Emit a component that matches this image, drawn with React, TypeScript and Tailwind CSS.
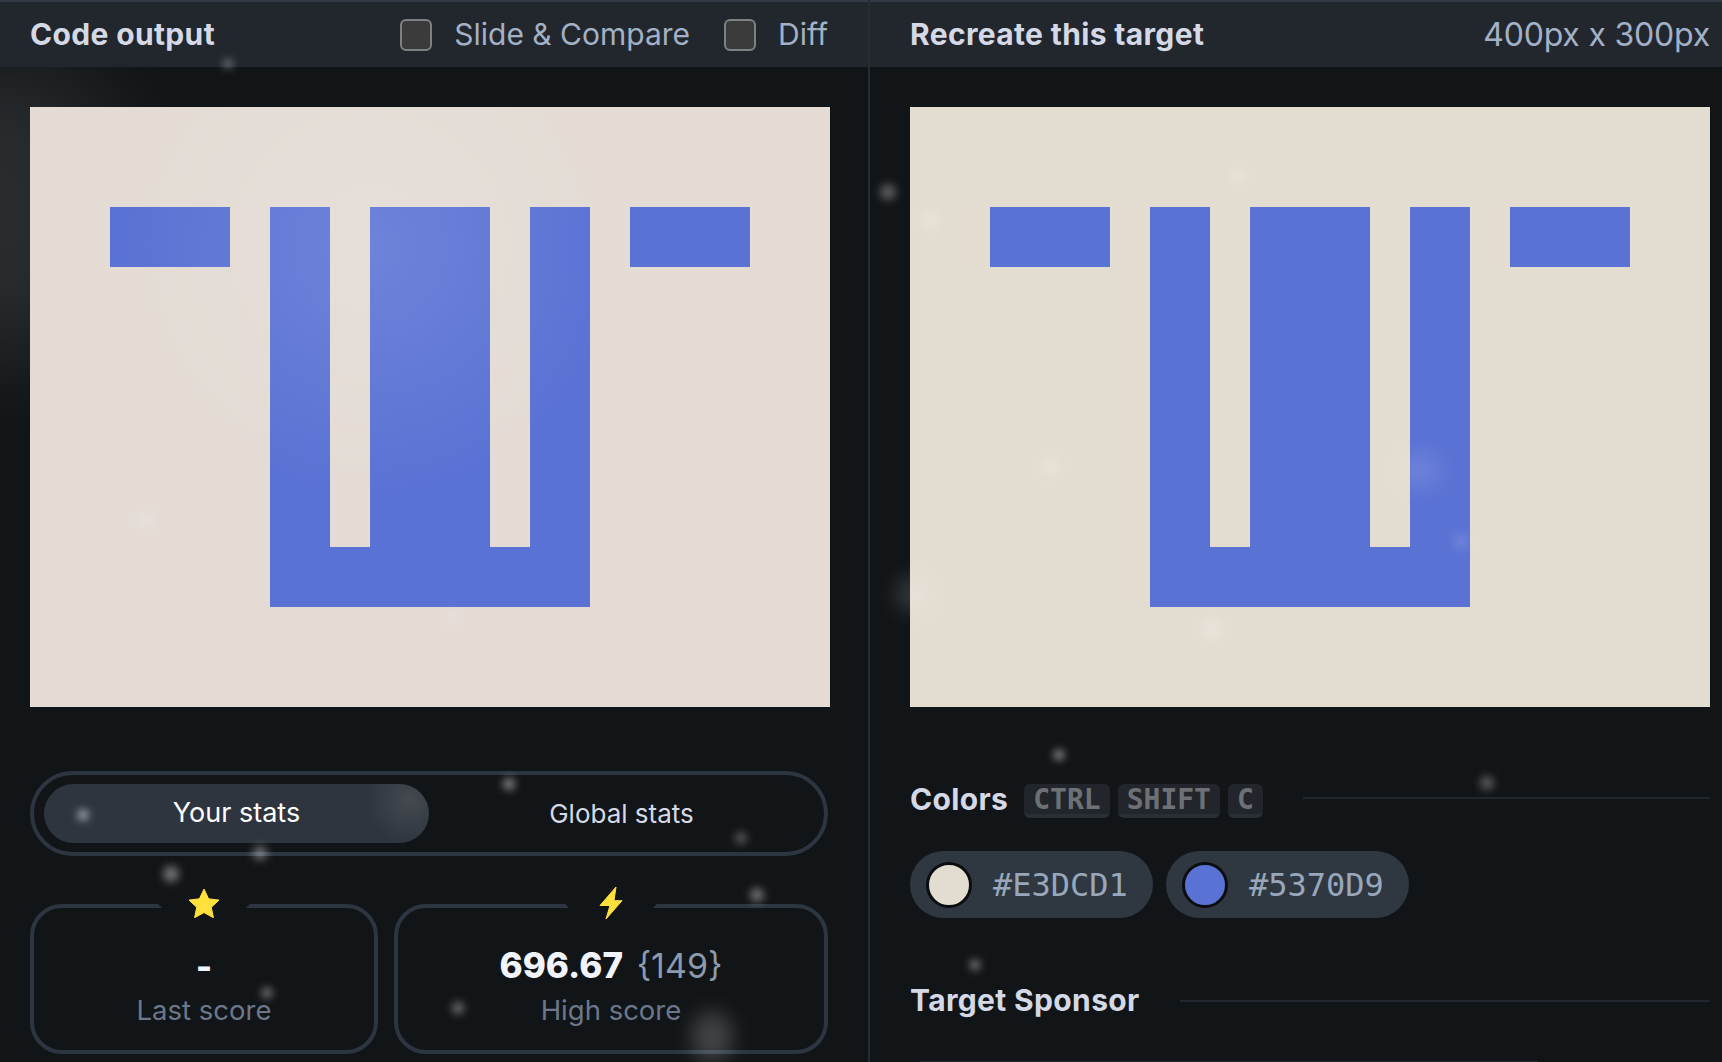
import { useState } from "react";

const sans = "font-['Inter','Noto_Sans',sans-serif]";

const particles = [
  "left-[224px] top-[60px] w-[8px] h-[8px] opacity-50",
  "left-[78px] top-[810px] w-[10px] h-[10px] opacity-70",
  "left-[503px] top-[778px] w-[12px] h-[12px] opacity-50",
  "left-[253px] top-[846px] w-[14px] h-[14px] opacity-40",
  "left-[163px] top-[866px] w-[16px] h-[16px] opacity-40",
  "left-[735px] top-[832px] w-[12px] h-[12px] opacity-30",
  "left-[750px] top-[888px] w-[14px] h-[14px] opacity-40",
  "left-[262px] top-[988px] w-[10px] h-[10px] opacity-50",
  "left-[452px] top-[1002px] w-[12px] h-[12px] opacity-40",
  "left-[880px] top-[184px] w-[16px] h-[16px] opacity-30",
  "left-[1054px] top-[750px] w-[10px] h-[10px] opacity-60",
  "left-[970px] top-[960px] w-[10px] h-[10px] opacity-50",
  "left-[1480px] top-[776px] w-[14px] h-[14px] opacity-30",
  "left-[1232px] top-[170px] w-[12px] h-[12px] opacity-20",
  "left-[922px] top-[212px] w-[16px] h-[16px] opacity-20",
  "left-[1042px] top-[458px] w-[18px] h-[18px] opacity-15",
  "left-[1202px] top-[620px] w-[20px] h-[20px] opacity-20",
  "left-[1452px] top-[532px] w-[18px] h-[18px] opacity-10",
  "left-[138px] top-[512px] w-[16px] h-[16px] opacity-15",
  "left-[446px] top-[610px] w-[12px] h-[12px] opacity-15",
];

const softGlows = [
  "left-[692px] top-[1012px] w-[40px] h-[50px] opacity-20",
  "left-[896px] top-[576px] w-[32px] h-[36px] opacity-15",
  "left-[1400px] top-[450px] w-[40px] h-[40px] opacity-10",
];

function Target({ tint, glow }: { tint: string; glow?: boolean }) {
  return (
    <div className={`relative flex h-[600px] w-[800px] shrink-0 gap-[40px] overflow-hidden pt-[100px] pl-[80px] ${tint}`}>
      <div className="h-[60px] w-[120px] bg-[#5a72d4]" />
      <div className="flex h-[400px] w-[320px] flex-col">
        <div className="flex h-[340px] gap-[40px]">
          <div className="h-full w-[60px] bg-[#5a72d4]" />
          <div className="h-full w-[120px] bg-[#5a72d4]" />
          <div className="h-full w-[60px] bg-[#5a72d4]" />
        </div>
        <div className="h-[60px] bg-[#5a72d4]" />
      </div>
      <div className="h-[60px] w-[120px] bg-[#5a72d4]" />
      {glow && (
        <div className="absolute inset-0 bg-[radial-gradient(circle_250px_at_340px_140px,rgba(255,255,255,0.12),rgba(255,255,255,0))]" />
      )}
    </div>
  );
}

function Heading({ children }: { children: React.ReactNode }) {
  return <h2 className="text-[30px] font-bold tracking-[0.35px] text-[#d5d9e6]">{children}</h2>;
}

function Checkbox({ label }: { label: string }) {
  const [on, setOn] = useState(false);
  return (
    <label className="flex items-center gap-[22px] text-[30px] text-[#a3b1c6]">
      <input
        type="checkbox"
        checked={on}
        onChange={(e) => setOn(e.target.checked)}
        className="h-[32px] w-[32px] appearance-none rounded-[6px] border-2 border-[#7d8184] bg-[#3b3b3b]"
      />
      {label}
    </label>
  );
}

function StatCard({
  icon,
  className,
  children,
  label,
}: {
  icon: React.ReactNode;
  className: string;
  children: React.ReactNode;
  label: string;
}) {
  return (
    <div className={`relative flex h-[150px] flex-col items-center justify-center rounded-[32px] border-4 border-[#2d3640] pt-[13px] ${className}`}>
      <div className="absolute top-[-4px] left-1/2 h-[4px] w-[92px] -translate-x-1/2 bg-[#111518] [clip-path:polygon(0_0,100%_0,calc(100%-4px)_100%,4px_100%)]" />
      <div className="absolute top-[-22px] left-1/2 flex h-[34px] w-[40px] -translate-x-1/2 items-center justify-center">
        {icon}
      </div>
      <div className="text-[35px] leading-[44px] font-extrabold text-[#f1f4fa]">{children}</div>
      <div className="mt-[4px] text-[27.5px] leading-[36px] text-[#6c7889]">{label}</div>
    </div>
  );
}

function Kbd({ children }: { children: string }) {
  return (
    <kbd className="flex h-[34px] items-center rounded-[6px] border-b-[4px] border-[#2a2e35] bg-[#22262c] px-[9px] pt-[3px] font-['DejaVu_Sans_Mono',monospace] text-[28px] font-bold text-[#6d7176]">
      {children}
    </kbd>
  );
}

function Swatch({ hex, dot }: { hex: string; dot: string }) {
  return (
    <div className="flex h-[67px] w-[243px] items-center gap-[21px] rounded-full bg-[#2f3741] pl-[16px]">
      <div className={`h-[46px] w-[46px] rounded-full border-[3px] border-[#0b0d0f] ${dot}`} />
      <span className="font-['DejaVu_Sans_Mono',monospace] text-[32px] text-[#98a7bb]">{hex}</span>
    </div>
  );
}

export default function App() {
  const [tab, setTab] = useState("your");
  const activePill = "bg-[radial-gradient(circle_44px_at_366px_16px,#454a50,#2e353e)]";

  return (
    <div className={`relative flex h-screen w-full overflow-hidden bg-[#111518] ${sans}`}>
      <div className="pointer-events-none absolute top-[60px] left-[-120px] h-[300px] w-[240px] rounded-full bg-white/10 blur-[50px]" />
      <div className="relative flex w-[870px] shrink-0 flex-col border-r-2 border-[#262c33]">
        <header className="flex h-[67px] items-center justify-between border-t-2 border-[#323a45] bg-[#22272e] pr-[40px] pl-[30px]">
          <Heading>Code output</Heading>
          <div className="flex gap-[34px]">
            <Checkbox label="Slide & Compare" />
            <Checkbox label="Diff" />
          </div>
        </header>
        <div className="mt-[40px] pl-[30px]">
          <Target tint="bg-[#e3dbd4]" glow />
        </div>
        <div className="mt-[64px] mr-[40px] ml-[30px] flex h-[85px] items-center rounded-full border-4 border-[#2d3640] px-[10px]">
          <button
            type="button"
            onClick={() => setTab("your")}
            className={`h-[59px] w-[385px] rounded-full text-[27px] text-white ${tab === "your" ? activePill : ""}`}
          >
            Your stats
          </button>
          <button
            type="button"
            onClick={() => setTab("global")}
            className={`h-[59px] flex-1 rounded-full text-[26px] text-[#d5d9e6] ${tab === "global" ? "bg-[#2e353e]" : ""}`}
          >
            Global stats
          </button>
        </div>
        <div className="mt-[48px] mr-[40px] ml-[30px] flex gap-[16px]">
          <StatCard
            className="w-[348px]"
            label="Last score"
            icon={
              <svg width="32" height="30" viewBox="0 0 32 30">
                <path d="M16 1l4.6 9.8 10.4 1.3-7.7 7.2 2.1 10.4L16 24.6 6.6 29.7l2.1-10.4L1 12.1l10.4-1.3z" fill="#ffe03d" stroke="#ffe03d" strokeLinejoin="round" />
              </svg>
            }
          >
            -
          </StatCard>
          <StatCard
            className="flex-1"
            label="High score"
            icon={
              <svg width="24" height="34" viewBox="0 0 24 34">
                <path d="M17 1L1 19.5h10L7 33l16-18.3h-8z" fill="#ffe03d" stroke="#ffe03d" strokeLinejoin="round" />
              </svg>
            }
          >
            696.67 <span className="ml-[6px] text-[34px] font-normal text-[#8c9aae]">{"{149}"}</span>
          </StatCard>
        </div>
      </div>

      <div className="relative flex min-w-0 flex-1 flex-col">
        <header className="flex h-[67px] items-center justify-between border-t-2 border-[#323a45] bg-[#22272e] pr-[12px] pl-[40px]">
          <Heading>Recreate this target</Heading>
          <span className="text-[32px] tracking-[-0.2px] text-[#a3b1c6]">400px x 300px</span>
        </header>
        <div className="mt-[40px] pl-[40px]">
          <Target tint="bg-[#e3dcd1]" />
        </div>
        <div className="mt-[70px] mr-[12px] ml-[40px] flex items-center gap-[16px]">
          <Heading>Colors</Heading>
          <div className="mt-[2px] flex gap-[8px]">
            <Kbd>CTRL</Kbd>
            <Kbd>SHIFT</Kbd>
            <Kbd>C</Kbd>
          </div>
          <div className="mb-[4px] ml-[24px] h-[2px] flex-1 bg-[#22262e]" />
        </div>
        <div className="mt-[29px] ml-[40px] flex gap-[13px]">
          <Swatch hex="#E3DCD1" dot="bg-[#e3dcd1]" />
          <Swatch hex="#5370D9" dot="bg-[#5a72d4]" />
        </div>
        <div className="mt-[60px] mr-[12px] ml-[40px] flex items-center gap-[40px]">
          <Heading>Target Sponsor</Heading>
          <div className="h-[2px] flex-1 bg-[#22262e]" />
        </div>
        <div className="mt-[38px] ml-[50px] h-[1px] w-[618px] bg-[#2a2d31]" />
      </div>

      {particles.map((p) => (
        <div key={p} className={`pointer-events-none absolute rounded-full bg-white blur-[4px] ${p}`} />
      ))}
      {softGlows.map((p) => (
        <div key={p} className={`pointer-events-none absolute rounded-full bg-white blur-[10px] ${p}`} />
      ))}
    </div>
  );
}
